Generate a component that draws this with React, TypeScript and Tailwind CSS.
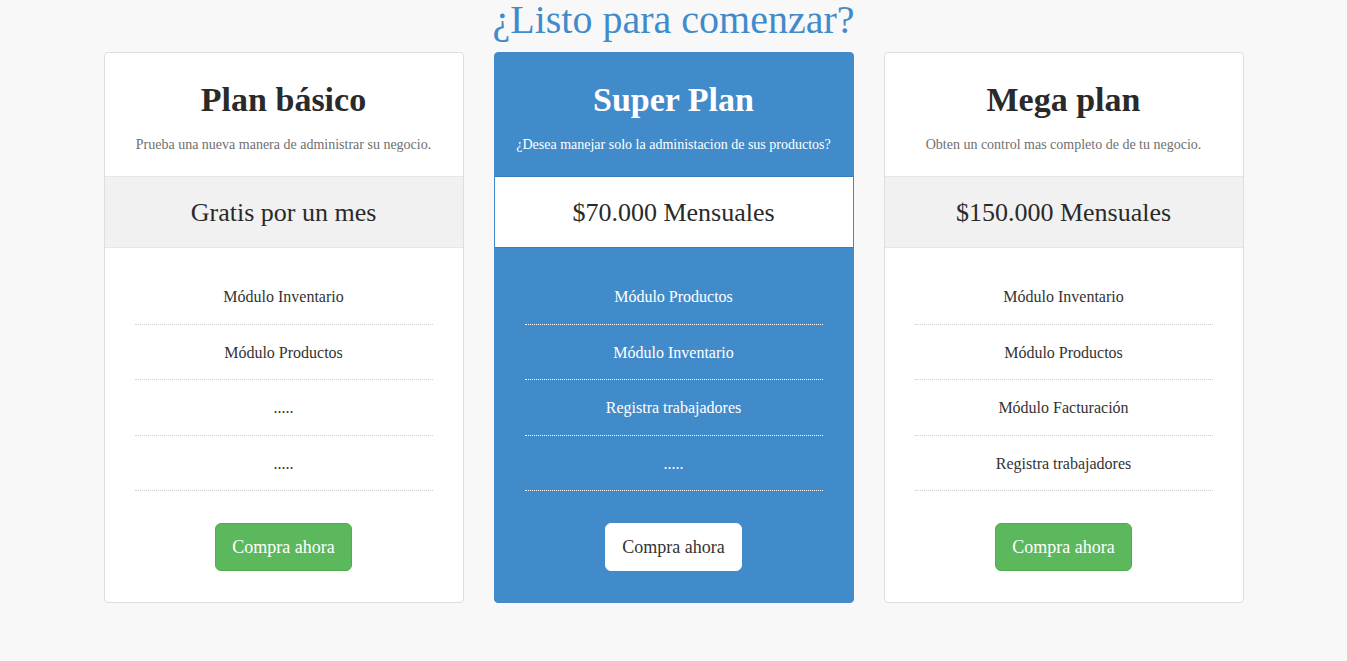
import React from "react";

type Plan = {
  title: string;
  subtitle: string;
  price: string;
  items: string[];
  featured?: boolean;
};

const plans: Plan[] = [
  {
    title: "Plan básico",
    subtitle: "Prueba una nueva manera de administrar su negocio.",
    price: "Gratis por un mes",
    items: ["Módulo Inventario", "Módulo Productos", ".....", "....."],
  },
  {
    title: "Super Plan",
    subtitle: "¿Desea manejar solo la administacion de sus productos?",
    price: "$70.000 Mensuales",
    items: ["Módulo Productos", "Módulo Inventario", "Registra trabajadores", "....."],
    featured: true,
  },
  {
    title: "Mega plan",
    subtitle: "Obten un control mas completo de de tu negocio.",
    price: "$150.000 Mensuales",
    items: ["Módulo Inventario", "Módulo Productos", "Módulo Facturación", "Registra trabajadores"],
  },
];

function Card({ plan }: { plan: Plan }) {
  const f = plan.featured;
  return (
    <div
      className={
        "flex w-[360px] flex-col rounded-[4px] border " +
        (f ? "border-[#428bca] bg-[#428bca]" : "border-[#dddddd] bg-white")
      }
    >
      <div className="flex h-[123px] flex-col items-center pt-[27px]">
        <h2
          className={
            "text-[34px] font-bold leading-[40px] " + (f ? "text-white" : "text-[#2a2a2a]")
          }
        >
          {plan.title}
        </h2>
        <p className={"mt-[15px] text-[14px] leading-[20px] " + (f ? "text-white" : "text-[#6f6f6f]")}>
          {plan.subtitle}
        </p>
      </div>
      <div
        className={
          "flex h-[72px] items-center justify-center border-y text-[26px] text-[#2a2a2a] " +
          (f ? "border-[#3a7fbd] bg-white" : "border-[#e6e6e6] bg-[#f1f1f1]")
        }
      >
        {plan.price}
      </div>
      <ul className="mx-[30px] pt-[21px]">
        {plan.items.map((it, i) => (
          <li
            key={i}
            className={
              "flex h-[55.5px] items-center justify-center border-b border-dotted pt-[2px] text-[16px] " +
              (f ? "border-white text-white" : "border-[#cfcfcf] text-[#333333]")
            }
          >
            {it}
          </li>
        ))}
      </ul>
      <div className="flex justify-center pb-[31px] pt-[32px]">
        <button
          className={
            "h-[48px] w-[137px] rounded-[6px] border text-[18px] " +
            (f
              ? "border-white bg-white text-[#333333]"
              : "border-[#4cae4c] bg-[#5cb85c] text-white")
          }
        >
          Compra ahora
        </button>
      </div>
    </div>
  );
}

export default function App() {
  return (
    <div
      className="min-h-[661px] w-full bg-[#f8f8f8] pt-[2px]"
      style={{ fontFamily: '"Liberation Serif", "Times New Roman", serif' }}
    >
      <h1 className="text-center text-[40px] leading-[36px] text-[#428bca]">
        ¿Listo para comenzar?
      </h1>
      <div className="mx-auto flex w-[1140px] justify-between pt-[14px]">
        {plans.map((p) => (
          <Card key={p.title} plan={p} />
        ))}
      </div>
    </div>
  );
}
